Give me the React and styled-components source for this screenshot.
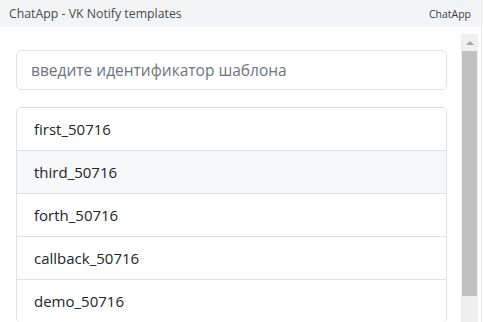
import React from 'react'
import styled, { createGlobalStyle } from 'styled-components'

const GlobalStyle = createGlobalStyle`
	html, body {
		margin: 0;
		padding: 0;
		overflow: hidden;
		background: #fff;
	}
	* {
		box-sizing: border-box;
	}
`

const Page = styled.div`
	height: 322px;
	overflow: hidden;
	display: flex;
	flex-direction: column;
	font-family: 'Open Sans', 'Noto Sans', sans-serif;
	border-right: 1px solid #ececec;
	margin-right: 1px;
`

const Header = styled.header`
	flex: 0 0 27px;
	display: flex;
	align-items: center;
	justify-content: space-between;
	padding: 0 10px 0 9px;
	background-color: #f3f4f5;
`

const HeaderTitle = styled.span`
	font-size: 12.3px;
	color: #4a4a4a;
`

const HeaderBrand = styled.span`
	font-size: 10.5px;
	color: #3c3c3c;
`

const Body = styled.div`
	flex: 1;
	min-height: 0;
	display: flex;
	padding: 7px 3px 0 0;
`

const Content = styled.div`
	flex: 1;
	min-width: 0;
	overflow: hidden;
	padding: 16px 14px 0 16px;
`

const ScrollBar = styled.div`
	flex: 0 0 17px;
	display: flex;
	flex-direction: column;
	background-color: #f0f0f0;
`

const ScrollArrow = styled.div`
	flex: 0 0 17px;
	display: flex;
	align-items: center;
	justify-content: center;
	&::before {
		content: '';
		border-left: 4px solid transparent;
		border-right: 4px solid transparent;
		border-bottom: 4px solid #a3a3a3;
	}
`

const ScrollThumb = styled.div`
	flex: 0 0 245px;
	margin: 0 1px;
	background-color: #c1c1c1;
`

const SearchInput = styled.input`
	display: block;
	width: 100%;
	height: 40px;
	padding: 0 14px;
	border: 1px solid #dee2e6;
	border-radius: 5px;
	font-family: inherit;
	font-size: 15.5px;
	color: #212529;
	outline: none;
	&::placeholder {
		color: #6c757d;
	}
`

const TemplateList = styled.ul`
	list-style: none;
	margin: 17px 0 0;
	padding: 0;
	border: 1px solid #dee2e6;
	border-radius: 5px;
	overflow: hidden;
`

const TemplateItem = styled.li`
	height: 43px;
	display: flex;
	align-items: center;
	padding: 0 17px;
	font-size: 15px;
	color: #212529;
	background-color: ${(props) => (props.active ? '#f7f8f9' : '#fff')};
	border-top: 1px solid #dee2e6;
	&:first-child {
		border-top: none;
		height: 42px;
	}
`

const templates = [
	'first_50716',
	'third_50716',
	'forth_50716',
	'callback_50716',
	'demo_50716',
]

const App = () => {
	return (
		<>
			<GlobalStyle />
			<Page>
				<Header>
					<HeaderTitle>ChatApp - VK Notify templates</HeaderTitle>
					<HeaderBrand>ChatApp</HeaderBrand>
				</Header>
				<Body>
					<Content>
						<SearchInput placeholder='введите идентификатор шаблона' />
						<TemplateList>
							{templates.map((name, i) => (
								<TemplateItem key={name} active={i === 1}>
									{name}
								</TemplateItem>
							))}
						</TemplateList>
					</Content>
					<ScrollBar>
						<ScrollArrow />
						<ScrollThumb />
					</ScrollBar>
				</Body>
			</Page>
		</>
	)
}

export default App
